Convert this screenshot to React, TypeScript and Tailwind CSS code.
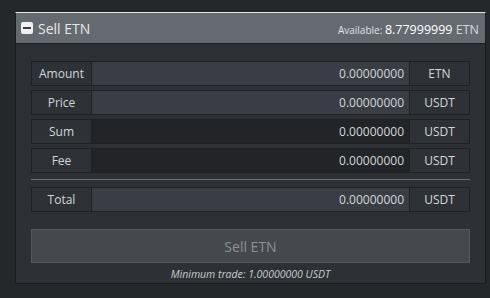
import { useState } from "react";

type Row = { label: string; unit: string; dark?: boolean };

const rows: Row[] = [
  { label: "Amount", unit: "ETN" },
  { label: "Price", unit: "USDT" },
  { label: "Sum", unit: "USDT", dark: true },
  { label: "Fee", unit: "USDT", dark: true },
];

function Field({ label, unit, dark }: Row) {
  return (
    <div className="flex h-[25px] border border-[#1f2225] bg-[#2e3236] text-[12px] text-[#d3d7db]">
      <div className="flex w-[60px] items-center justify-center border-r border-[#1f2225]">{label}</div>
      <div
        className={
          "flex flex-1 items-center justify-end pr-[5px] " + (dark ? "bg-[#222427]" : "bg-[#3a3e44]")
        }
      >
        0.00000000
      </div>
      <div className="flex w-[60px] items-center justify-center border-l border-[#1f2225]">{unit}</div>
    </div>
  );
}

export default function App() {
  const [open] = useState(true);
  return (
    <div className="h-[298px] w-[490px] bg-[#25282b] pl-[15px] pt-[12px] font-['Open_Sans',sans-serif]">
      <div className="w-[471px] border border-t-[#e6e6e6] border-x-[#1a1c1e] border-b-[#1a1c1e] bg-[#2d3135]">
        {/* header */}
        <div className="flex h-[31px] items-center justify-between border-b border-[#1d2023] bg-[#656a70] pl-[5px] pr-[6px]">
          <div className="flex items-center gap-[5px]">
            <span className="flex h-[12px] w-[12px] items-center justify-center rounded-[2px] bg-[#f0f0f0]">
              <span className="h-[2px] w-[8px] bg-[#3a3e44]" />
            </span>
            <span className="text-[14px] text-[#e6e8ea]">Sell ETN</span>
          </div>
          <div className="text-[#e6e8ea]">
            <span className="text-[10px] text-[#dfe2e5]">Available: </span>
            <span className="text-[12.5px] text-white">8.77999999</span>
            <span className="text-[12.5px] text-[#d5d8db]"> ETN</span>
          </div>
        </div>

        {open && (
          <div className="px-[15px] pb-[2px] pt-[17px]">
            <div className="flex flex-col gap-[4px]">
              {rows.map((r) => (
                <Field key={r.label} {...r} />
              ))}
            </div>
            <div className="my-[6px] h-[2px] border-t border-[#6e7276]" />
            <Field label="Total" unit="USDT" />
            <button className="mt-[17px] flex h-[34px] w-full items-center justify-center border border-[#55595d] bg-[#45494d] text-[14px] text-[#8e9194]">
              Sell ETN
            </button>
            <p className="mt-[5px] text-center text-[10.5px] leading-[13px] italic text-[#c9cdd1]">
              Minimum trade: 1.00000000 USDT
            </p>
          </div>
        )}
      </div>
    </div>
  );
}
